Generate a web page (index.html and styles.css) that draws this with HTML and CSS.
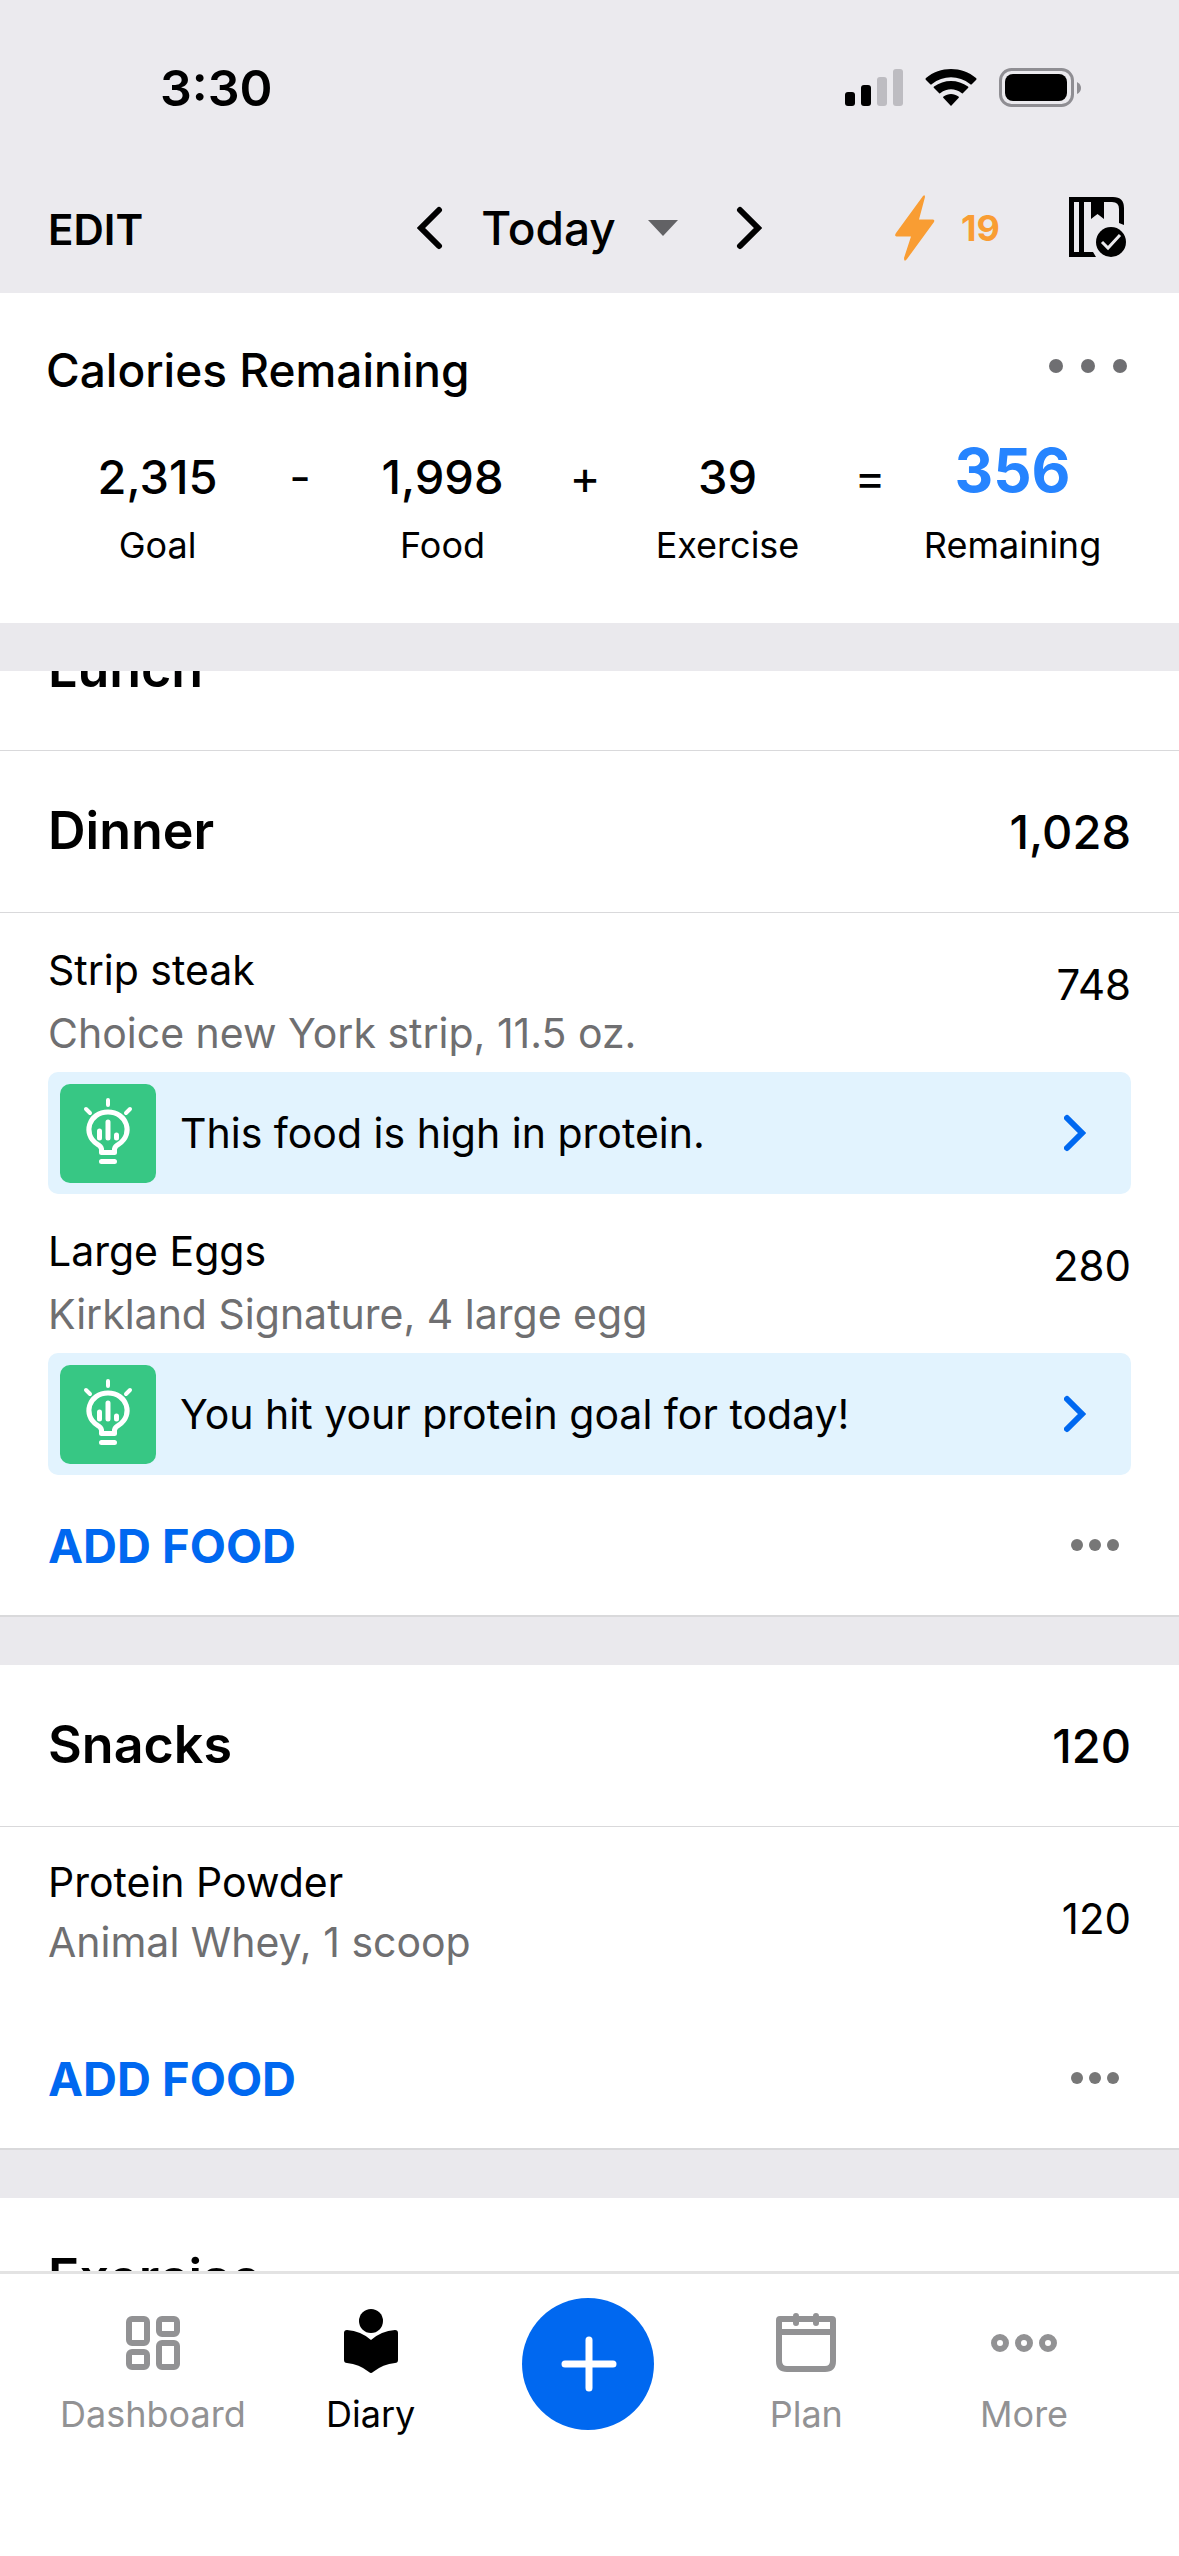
FILE: index.html
```html
<!DOCTYPE html>
<html lang="en">
<head>
    <meta charset="UTF-8">
    <meta name="viewport" content="width=device-width, initial-scale=1.0">
    <title>Diary</title>
    <link rel="stylesheet" href="styles.css">
</head>
<body>
<header class="header">
    <div class="status-bar">
        <span class="clock">3:30</span>
        <div class="status-icons">
            <svg width="58" height="38" viewBox="0 0 58 38">
                <rect x="0" y="23" width="10" height="14" rx="3"/>
                <rect x="16" y="16" width="10" height="21" rx="3"/>
                <rect x="32" y="8" width="10" height="29" rx="3" fill="#bdbcc1"/>
                <rect x="48" y="0" width="10" height="37" rx="3" fill="#bdbcc1"/>
            </svg>
            <svg width="52" height="38" viewBox="0 0 52 38">
                <path d="M1 11 Q0 10 1 9 C15 -3 37 -3 51 9 Q52 10 51 11 L47 15 Q46 16 45 15 C34 6 18 6 7 15 Q6 16 5 15 Z"/>
                <path d="M9 19 Q8 18 9 17.500 C19 10 33 10 43 17.500 Q44 18 43 19 L38.500 23.500 Q37.500 25 36.500 24 C30 19 22 19 15.500 24 Q14.500 25 13.500 23.500 Z"/>
                <path d="M18.500 29 Q17.500 28 18.500 27.500 C23 24 29 24 33.500 27.500 Q34.500 28 33.500 29 L26 37 Z"/>
            </svg>
            <svg width="82" height="40" viewBox="0 0 82 40">
                <rect x="1.500" y="1.500" width="72" height="36" rx="11" fill="none" stroke="#8f8e93" stroke-width="3"/>
                <rect x="6" y="6" width="62" height="27" rx="8"/>
                <path d="M78 14 Q82 16 82 20 Q82 24 78 26 Z" fill="#8f8e93"/>
            </svg>
        </div>
    </div>
    <div class="top-bar">
        <button class="edit-btn">EDIT</button>
        <div class="date-picker">
            <button aria-label="Previous day">
                <svg width="26" height="44" viewBox="0 0 26 44"><path d="M22 4 L4 22 L22 40" class="arrow"/></svg>
            </button>
            <button class="today-btn">Today
                <svg width="30" height="16" viewBox="0 0 30 16"><path d="M0 0 H30 L15 16 Z" fill="#626265"/></svg>
            </button>
            <button aria-label="Next day">
                <svg width="26" height="44" viewBox="0 0 26 44"><path d="M4 4 L22 22 L4 40" class="arrow"/></svg>
            </button>
        </div>
        <div class="top-actions">
            <button class="streak-btn">
                <svg width="40" height="66" viewBox="0 0 40 66"><path d="M28 1 Q30 -1 30 2 L24 24.500 H38 Q40 25 39 27 L12 64 Q9 68 9 63 L16 41.500 H1.500 Q-1 41 1 38 Z" fill="#f99d33"/></svg>
                19
            </button>
            <button aria-label="Complete diary">
                <svg width="58" height="62" viewBox="0 0 58 62">
                    <path d="M0 0 H44 Q55 0 55 11 V28 L50 26 V12 Q50 5 43 5 H15 V55 H24 L27 60 H0 Z M5 5 V55 H10 V5 Z" fill-rule="evenodd"/>
                    <path d="M22 4 H35 V22 L28.500 17 L22 22 Z"/>
                    <circle cx="42" cy="45" r="15"/>
                    <path d="M33 45 L39 51 L51 38" fill="none" stroke="#ebeaee" stroke-width="3"/>
                </svg>
            </button>
        </div>
    </div>
</header>

<section class="summary">
    <div class="summary-head">
        <h2>Calories Remaining</h2>
        <button aria-label="Summary options">
            <svg width="78" height="14" viewBox="0 0 78 14" fill="#6f6f72"><circle cx="7" cy="7" r="7"/><circle cx="39" cy="7" r="7"/><circle cx="71" cy="7" r="7"/></svg>
        </button>
    </div>
    <div class="equation">
        <div class="term"><b>2,315</b><span>Goal</span></div>
        <div class="operator">-</div>
        <div class="term"><b>1,998</b><span>Food</span></div>
        <div class="operator">+</div>
        <div class="term"><b>39</b><span>Exercise</span></div>
        <div class="operator">=</div>
        <div class="term remaining"><b>356</b><span>Remaining</span></div>
    </div>
</section>

<main class="diary">
    <div class="meals">
        <section class="meal-head"><h3>Lunch</h3></section>

        <section class="meal">
            <div class="meal-head"><h3>Dinner</h3><span>1,028</span></div>
            <div class="food">
                <div>
                    <p>Strip steak</p>
                    <p class="detail">Choice new York strip, 11.5 oz.</p>
                </div>
                <span class="calories">748</span>
            </div>
            <a href="#" class="tip">
                <svg class="bulb" width="96" height="99" viewBox="0 0 96 99">
                    <path d="M41.500 68.500 V65 Q41 62 37 60 C22 50 29 28 48 28 C67 28 74 50 59 60 Q55 62 54.500 65 V68.500 Z" stroke-width="5"/>
                    <path d="M48 16 V21 M26 25 L30 29 M70 25 L66 29" stroke-width="4"/>
                    <path d="M39.500 47 V54 M48 38 V54 M56.500 51 V54 M41.500 77.500 H54.500" stroke-width="5"/>
                </svg>
                <span>This food is high in protein.</span>
                <svg width="22" height="38" viewBox="0 0 22 38"><path d="M3 4 L18 19 L3 34" class="tip-arrow"/></svg>
            </a>
            <div class="food">
                <div>
                    <p>Large Eggs</p>
                    <p class="detail">Kirkland Signature, 4 large egg</p>
                </div>
                <span class="calories">280</span>
            </div>
            <a href="#" class="tip">
                <svg class="bulb" width="96" height="99" viewBox="0 0 96 99">
                    <path d="M41.500 68.500 V65 Q41 62 37 60 C22 50 29 28 48 28 C67 28 74 50 59 60 Q55 62 54.500 65 V68.500 Z" stroke-width="5"/>
                    <path d="M48 16 V21 M26 25 L30 29 M70 25 L66 29" stroke-width="4"/>
                    <path d="M39.500 47 V54 M48 38 V54 M56.500 51 V54 M41.500 77.500 H54.500" stroke-width="5"/>
                </svg>
                <span>You hit your protein goal for today!</span>
                <svg width="22" height="38" viewBox="0 0 22 38"><path d="M3 4 L18 19 L3 34" class="tip-arrow"/></svg>
            </a>
            <div class="meal-foot">
                <button class="add-btn">ADD FOOD</button>
                <button aria-label="Dinner options">
                    <svg width="48" height="12" viewBox="0 0 48 12" fill="#777"><circle cx="6" cy="6" r="6"/><circle cx="24" cy="6" r="6"/><circle cx="42" cy="6" r="6"/></svg>
                </button>
            </div>
        </section>

        <section class="meal">
            <div class="meal-head"><h3>Snacks</h3><span>120</span></div>
            <div class="food plain">
                <div>
                    <p>Protein Powder</p>
                    <p class="detail">Animal Whey, 1 scoop</p>
                </div>
                <span class="calories">120</span>
            </div>
            <div class="meal-foot">
                <button class="add-btn">ADD FOOD</button>
                <button aria-label="Snacks options">
                    <svg width="48" height="12" viewBox="0 0 48 12" fill="#777"><circle cx="6" cy="6" r="6"/><circle cx="24" cy="6" r="6"/><circle cx="42" cy="6" r="6"/></svg>
                </button>
            </div>
        </section>

        <section class="meal-head"><h3>Exercise</h3></section>
    </div>
</main>

<nav class="tab-bar">
    <a href="#" class="tab">
        <svg width="60" height="66" viewBox="0 0 60 66" fill="none" stroke="#929294" stroke-width="6">
            <rect x="6" y="10" width="18" height="24" rx="3"/>
            <rect x="36" y="10" width="18" height="15" rx="3"/>
            <rect x="6" y="43" width="18" height="15" rx="3"/>
            <rect x="36" y="34" width="18" height="24" rx="3"/>
        </svg>
        Dashboard
    </a>
    <a href="#" class="tab active">
        <svg width="60" height="66" viewBox="0 0 60 66">
            <circle cx="30" cy="12" r="12"/>
            <path d="M6 21 Q20 22 30 31 Q40 22 54 21 Q57 21 57 24 V51 Q57 54 54 54 Q42 55 32 63 Q30 65 28 63 Q18 55 6 54 Q3 54 3 51 V24 Q3 21 6 21 Z"/>
        </svg>
        Diary
    </a>
    <button class="plus-btn" aria-label="Add">
        <svg width="58" height="56" viewBox="0 0 58 56"><path d="M30 4 V52 M6 28 H54" stroke="#fff" stroke-width="7" stroke-linecap="round"/></svg>
    </button>
    <a href="#" class="tab">
        <svg width="60" height="66" viewBox="0 0 60 66" fill="none" stroke="#929294" stroke-width="6">
            <path d="M3 11 Q3 10 4 10 H56 Q57 10 57 11 V52 Q57 60 49 60 H11 Q3 60 3 52 Z M3 23 H57"/>
            <path d="M20 7 V14 M40 7 V14" stroke-linecap="round"/>
        </svg>
        Plan
    </a>
    <a href="#" class="tab">
        <svg width="66" height="66" viewBox="0 0 66 66" fill="none" stroke="#929294" stroke-width="6">
            <circle cx="9" cy="34" r="6"/><circle cx="33" cy="34" r="6"/><circle cx="57" cy="34" r="6"/>
        </svg>
        More
    </a>
</nav>
</body>
</html>
```
FILE: styles.css
```css
* {
    box-sizing: border-box;
}

body {
    display: flex;
    flex-direction: column;
    height: 100vh;
    margin: 0;
    background-color: #fff;
    color: #000;
    font-family: Inter, 'Liberation Sans', sans-serif;
    font-size: 41px;
}

h2, h3, p {
    margin: 0;
}

button {
    padding: 0;
    border: none;
    background: none;
    color: inherit;
    font: inherit;
    cursor: pointer;
}

a {
    color: inherit;
    text-decoration: none;
}

svg {
    display: block;
    flex-shrink: 0;
}

/* status bar and date */
.header {
    flex-shrink: 0;
    padding-bottom: 14px;
    background-color: #ebeaee;
}

.status-bar {
    display: flex;
    justify-content: space-between;
    align-items: center;
    height: 176px;
    padding: 0 98px 0 160px;
}

.clock {
    font-size: 50px;
    font-weight: 600;
}

.status-icons {
    display: flex;
    align-items: center;
    gap: 22px;
}

.top-bar {
    display: grid;
    grid-template-columns: 1fr auto 1fr;
    align-items: center;
    height: 103px;
    padding: 0 52px 0 48px;
}

.edit-btn {
    justify-self: start;
    padding-top: 4px;
    font-size: 42px;
    font-weight: 600;
}

.date-picker {
    display: flex;
    align-items: center;
    gap: 38px;
    padding-left: 4px;
}

.arrow {
    fill: none;
    stroke: #000;
    stroke-width: 6;
    stroke-linecap: round;
}

.today-btn {
    display: flex;
    align-items: center;
    gap: 32px;
    margin-right: 20px;
    font-size: 46px;
    font-weight: 500;
}

.top-actions {
    display: flex;
    justify-content: flex-end;
    align-items: center;
    gap: 69px;
}

.streak-btn {
    display: flex;
    align-items: center;
    gap: 26px;
    color: #f99d33;
    font-size: 36px;
    font-weight: 700;
}

/* calories remaining */
.summary {
    flex-shrink: 0;
    height: 330px;
    padding: 42px 52px 0 46px;
}

.summary-head {
    display: flex;
    justify-content: space-between;
    align-items: center;
    height: 70px;
}

.summary-head h2 {
    font-size: 46px;
    font-weight: 500;
}

.summary-head button {
    padding-bottom: 8px;
}

.equation {
    display: flex;
    margin: 36px 12px 0 9px;
}

.term {
    flex: 1 1 0;
    display: flex;
    flex-direction: column;
    align-items: center;
}

.term b {
    font-size: 47px;
    font-weight: 500;
    line-height: 72px;
}

.term span {
    margin-top: 7px;
    font-size: 36px;
    line-height: 50px;
}

.term.remaining b {
    color: #2684ff;
    font-size: 60px;
    font-weight: 700;
    line-height: 58px;
    padding-bottom: 14px;
}

.operator {
    width: 80px;
    font-size: 47px;
    line-height: 72px;
    text-align: center;
}

/* scrolling list of meals */
.diary {
    flex: 1;
    overflow: hidden;
    border-top: 48px solid #eae9ed;
}

.meals {
    margin-top: -82px;
}

.meal {
    border-bottom: 48px solid #eae9ed;
}

.meal-head {
    display: flex;
    justify-content: space-between;
    align-items: center;
    height: 162px;
    padding: 0 48px;
    border-bottom: 1px solid #d9d9db;
}

.meal-head h3 {
    padding-bottom: 2px;
    font-size: 52px;
    font-weight: 600;
}

.meal-head span {
    font-size: 47px;
    font-weight: 500;
}

.food {
    display: flex;
    justify-content: space-between;
    padding: 26px 48px 7px;
    line-height: 63px;
}

.food.plain {
    align-items: center;
    padding: 25px 48px 36px;
    line-height: 60px;
}

.detail {
    color: #6f6f71;
}

.calories {
    padding-top: 14px;
    font-size: 42px;
}

.tip {
    display: flex;
    align-items: center;
    height: 122px;
    margin: 0 48px;
    padding: 0 45px 0 12px;
    border-radius: 10px;
    background-color: #e2f3fe;
}

.tip span {
    flex: 1;
    padding-left: 24px;
}

.bulb {
    border-radius: 10px;
    background-color: #37c784;
    fill: none;
    stroke: #fff;
    stroke-linecap: round;
    stroke-linejoin: round;
}

.tip-arrow {
    fill: none;
    stroke: #0068f0;
    stroke-width: 6;
    stroke-linecap: round;
}

.meal-foot {
    display: flex;
    justify-content: space-between;
    align-items: center;
    height: 142px;
    padding: 0 60px 0 48px;
    border-bottom: 2px solid #d9d9db;
}

.add-btn {
    color: #0068f0;
    font-size: 47px;
    font-weight: 700;
}

/* bottom tabs */
.tab-bar {
    display: grid;
    grid-template-columns: repeat(5, 1fr);
    flex-shrink: 0;
    height: 285px;
    padding: 24px 46px 0 44px;
    border-top: 3px solid #e3e3e3;
}

.tab {
    display: flex;
    flex-direction: column;
    align-items: center;
    gap: 14px;
    padding-top: 11px;
    color: #929294;
    font-size: 36px;
    line-height: 50px;
}

.tab.active {
    color: #000;
}

.plus-btn {
    display: flex;
    align-items: center;
    justify-content: center;
    justify-self: center;
    width: 132px;
    height: 132px;
    border-radius: 50%;
    background-color: #0068f0;
}
```
